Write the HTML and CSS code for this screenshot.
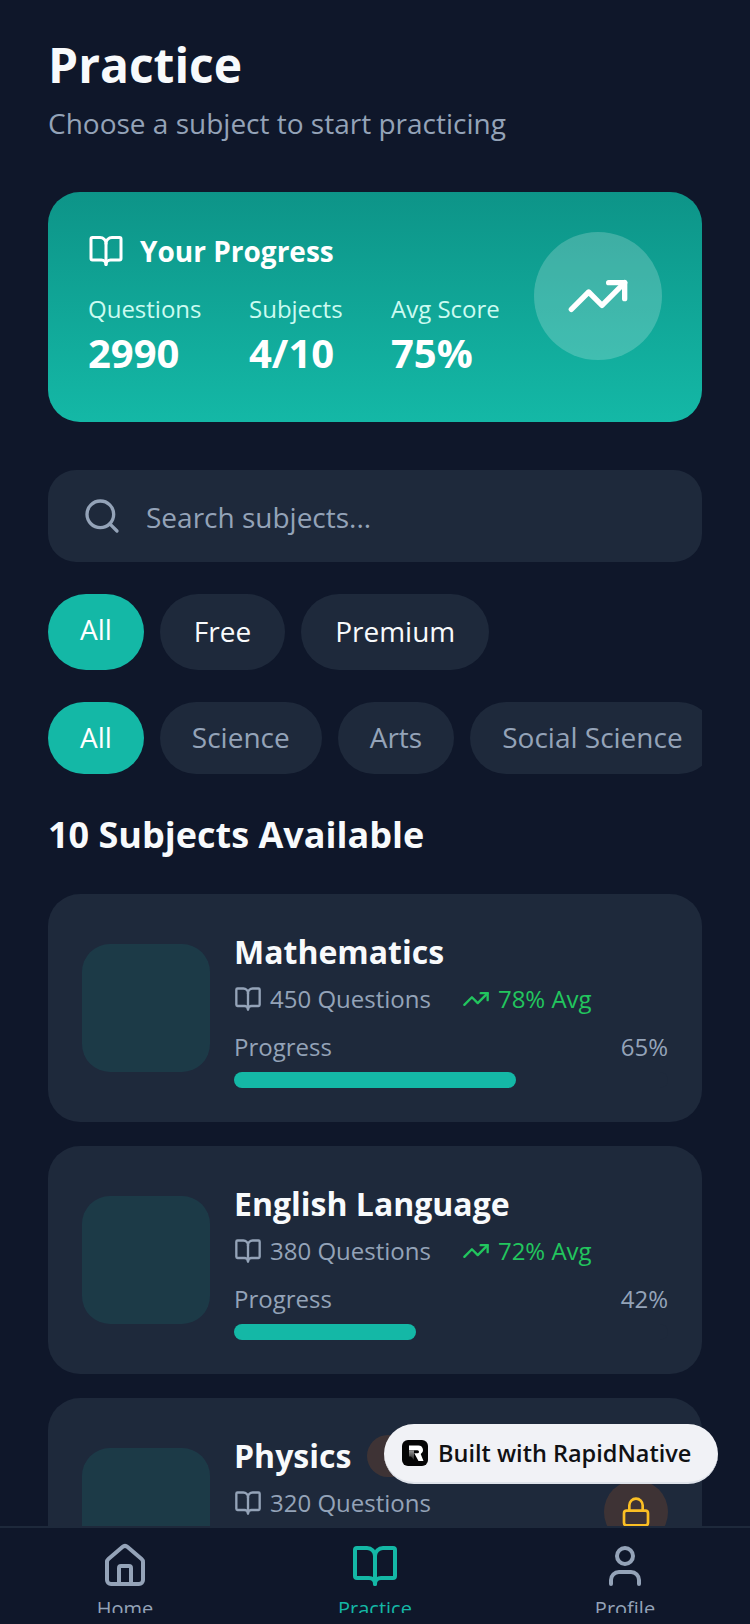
FILE: index.html
```html
<!DOCTYPE html>
<html lang="en">

<head>
    <meta charset="UTF-8">
    <meta name="viewport" content="width=device-width, initial-scale=1.0">
    <title>Practice</title>
    <link rel="stylesheet" href="styles.css">
</head>

<body>
    <div class="app">
        <div class="content">
            <h1 class="title">Practice</h1>
            <p class="subtitle">Choose a subject to start practicing</p>

            <div class="hero">
                <div class="hero-left">
                    <div class="hero-head">
                        <svg class="icon-hero-book" viewBox="0 0 24 24"><path d="M12 7v14" /><path d="M3 18a1 1 0 0 1-1-1V4a1 1 0 0 1 1-1h5a4 4 0 0 1 4 4 4 4 0 0 1 4-4h5a1 1 0 0 1 1 1v13a1 1 0 0 1-1 1h-6a3 3 0 0 0-3 3 3 3 0 0 0-3-3z" /></svg>
                        <span>Your Progress</span>
                    </div>
                    <div class="stats">
                        <div class="stat stat-q">
                            <div class="stat-label">Questions</div>
                            <div class="stat-value">2990</div>
                        </div>
                        <div class="stat stat-s">
                            <div class="stat-label">Subjects</div>
                            <div class="stat-value">4/10</div>
                        </div>
                        <div class="stat">
                            <div class="stat-label">Avg Score</div>
                            <div class="stat-value">75%</div>
                        </div>
                    </div>
                </div>
                <div class="hero-circle">
                    <svg class="icon-hero-trend" viewBox="0 0 24 24"><path d="M22 7 13.5 15.5 8.5 10.5 2 17" /><path d="M16 7h6v6" /></svg>
                </div>
            </div>

            <div class="search">
                <svg class="icon-search" viewBox="0 0 24 24"><circle cx="11" cy="11" r="8" /><path d="m21 21-4.3-4.3" /></svg>
                <span>Search subjects...</span>
            </div>

            <div class="chips chips-top">
                <span class="chip chip-active">All</span>
                <span class="chip chip-light">Free</span>
                <span class="chip chip-light">Premium</span>
            </div>

            <div class="chips chips-cat">
                <span class="chip chip-active">All</span>
                <span class="chip">Science</span>
                <span class="chip">Arts</span>
                <span class="chip">Social Science</span>
            </div>

            <h2 class="section">10 Subjects Available</h2>

            <div class="cards">
                <div class="card">
                    <div class="thumb"></div>
                    <div class="card-body">
                        <div class="card-title">Mathematics</div>
                        <div class="meta">
                            <span class="meta-item">
                                <svg class="icon-meta" viewBox="0 0 24 24"><path d="M12 7v14" /><path d="M3 18a1 1 0 0 1-1-1V4a1 1 0 0 1 1-1h5a4 4 0 0 1 4 4 4 4 0 0 1 4-4h5a1 1 0 0 1 1 1v13a1 1 0 0 1-1 1h-6a3 3 0 0 0-3 3 3 3 0 0 0-3-3z" /></svg>
                                450 Questions
                            </span>
                            <span class="meta-item meta-green">
                                <svg class="icon-meta" viewBox="0 0 24 24"><path d="M22 7 13.5 15.5 8.5 10.5 2 17" /><path d="M16 7h6v6" /></svg>
                                78% Avg
                            </span>
                        </div>
                        <div class="progress-row"><span>Progress</span><span>65%</span></div>
                        <div class="bar"><div class="bar-fill" style="width: 65%"></div></div>
                    </div>
                </div>

                <div class="card">
                    <div class="thumb"></div>
                    <div class="card-body">
                        <div class="card-title">English Language</div>
                        <div class="meta">
                            <span class="meta-item">
                                <svg class="icon-meta" viewBox="0 0 24 24"><path d="M12 7v14" /><path d="M3 18a1 1 0 0 1-1-1V4a1 1 0 0 1 1-1h5a4 4 0 0 1 4 4 4 4 0 0 1 4-4h5a1 1 0 0 1 1 1v13a1 1 0 0 1-1 1h-6a3 3 0 0 0-3 3 3 3 0 0 0-3-3z" /></svg>
                                380 Questions
                            </span>
                            <span class="meta-item meta-green">
                                <svg class="icon-meta" viewBox="0 0 24 24"><path d="M22 7 13.5 15.5 8.5 10.5 2 17" /><path d="M16 7h6v6" /></svg>
                                72% Avg
                            </span>
                        </div>
                        <div class="progress-row"><span>Progress</span><span>42%</span></div>
                        <div class="bar"><div class="bar-fill" style="width: 42%"></div></div>
                    </div>
                </div>

                <div class="card">
                    <div class="thumb"></div>
                    <div class="card-body">
                        <div class="card-title-row">
                            <div class="card-title">Physics</div>
                            <span class="pill">Premium</span>
                        </div>
                        <div class="meta-row">
                            <div class="meta">
                                <span class="meta-item">
                                    <svg class="icon-meta" viewBox="0 0 24 24"><path d="M12 7v14" /><path d="M3 18a1 1 0 0 1-1-1V4a1 1 0 0 1 1-1h5a4 4 0 0 1 4 4 4 4 0 0 1 4-4h5a1 1 0 0 1 1 1v13a1 1 0 0 1-1 1h-6a3 3 0 0 0-3 3 3 3 0 0 0-3-3z" /></svg>
                                    320 Questions
                                </span>
                            </div>
                            <div class="lock">
                                <svg class="icon-lock" viewBox="0 0 24 24"><rect x="3" y="11" width="18" height="11" rx="2" /><path d="M7 11V7a5 5 0 0 1 10 0v4" /></svg>
                            </div>
                        </div>
                    </div>
                </div>
            </div>
        </div>

        <div class="nav">
            <div class="nav-item">
                <svg class="icon-nav" viewBox="0 0 24 24"><path d="M15 21v-8a1 1 0 0 0-1-1h-4a1 1 0 0 0-1 1v8" /><path d="M3 10a2 2 0 0 1 .7-1.5l7-6a2 2 0 0 1 2.6 0l7 6a2 2 0 0 1 .7 1.5v9a2 2 0 0 1-2 2H5a2 2 0 0 1-2-2z" /></svg>
                <span>Home</span>
            </div>
            <div class="nav-item nav-active">
                <svg class="icon-nav" viewBox="0 0 24 24"><path d="M12 7v14" /><path d="M3 18a1 1 0 0 1-1-1V4a1 1 0 0 1 1-1h5a4 4 0 0 1 4 4 4 4 0 0 1 4-4h5a1 1 0 0 1 1 1v13a1 1 0 0 1-1 1h-6a3 3 0 0 0-3 3 3 3 0 0 0-3-3z" /></svg>
                <span>Practice</span>
            </div>
            <div class="nav-item">
                <svg class="icon-nav" viewBox="0 0 24 24"><path d="M19 21v-2a4 4 0 0 0-4-4H9a4 4 0 0 0-4 4v2" /><circle cx="12" cy="7" r="4" /></svg>
                <span>Profile</span>
            </div>
        </div>

        <div class="badge">
            <svg class="badge-logo" viewBox="0 0 26 26">
                <defs>
                    <linearGradient id="logoStem" x1="0" y1="0" x2="0" y2="1">
                        <stop offset="0" stop-color="#9a9a9a" />
                        <stop offset="1" stop-color="#1c1c1c" />
                    </linearGradient>
                </defs>
                <rect width="26" height="26" rx="6" fill="#050505" />
                <path d="M7 10.5h5v9.5l-3-3.500H7z" fill="url(#logoStem)" />
                <path d="M7 5.500h9.500a4.500 4.500 0 0 1 2.200 8.400L21.500 21h-5l-4.200-7.800H15.500a1.500 1.500 0 0 0 0-3H7z" fill="#fff" />
            </svg>
            <span>Built with RapidNative</span>
        </div>
    </div>
</body>

</html>
```

FILE: styles.css
```css
* {
    padding: 0;
    margin: 0;
    box-sizing: border-box;
}

html,
body {
    width: 750px;
    height: 1624px;
    overflow: hidden;
    background-color: #0f172a;
}

body {
    font-family: "Open Sans", "Noto Sans", sans-serif;
    color: #fff;
}

svg {
    fill: none;
    stroke: currentColor;
    stroke-linecap: round;
    stroke-linejoin: round;
    flex-shrink: 0;
}

.app {
    width: 750px;
    height: 1624px;
    position: relative;
    display: flex;
    flex-direction: column;
    overflow: hidden;
}

.content {
    flex: 1;
    min-height: 0;
    overflow: hidden;
    padding: 33px 48px 0;
}

.title {
    font-size: 48px;
    line-height: 64px;
    font-weight: 700;
    color: #f8fafc;
}

.subtitle {
    font-size: 28px;
    line-height: 40px;
    margin-top: 6px;
    color: #94a3b8;
}

/* progress card */
.hero {
    height: 230px;
    margin-top: 49px;
    padding: 40px 40px 0;
    border-radius: 32px;
    background: linear-gradient(180deg, #0d9488, #14b8a6);
    display: flex;
    align-items: flex-start;
    justify-content: space-between;
}

.hero-left {
    margin-top: -1px;
}

.hero-head {
    display: flex;
    align-items: center;
    gap: 16px;
    font-size: 28px;
    line-height: 40px;
    font-weight: 700;
}

.icon-hero-book {
    width: 36px;
    height: 36px;
    stroke-width: 2;
}

.stats {
    display: flex;
    margin-top: 22px;
}

.stat-q {
    width: 161px;
}

.stat-s {
    width: 142px;
}

.stat-label {
    font-size: 24px;
    line-height: 32px;
    color: #ccfbf1;
}

.stat-value {
    font-size: 40px;
    line-height: 56px;
    font-weight: 700;
}

.hero-circle {
    width: 128px;
    height: 128px;
    border-radius: 50%;
    background-color: rgba(255, 255, 255, .2);
    display: flex;
    align-items: center;
    justify-content: center;
}

.icon-hero-trend {
    width: 64px;
    height: 64px;
    stroke-width: 2;
}

/* search and filters */
.search {
    height: 92px;
    margin-top: 48px;
    padding: 0 34px;
    border-radius: 28px;
    background-color: #1e293b;
    display: flex;
    align-items: center;
    gap: 24px;
    font-size: 28px;
    color: #94a3b8;
}

.search span {
    padding-top: 2px;
}

.icon-search {
    width: 40px;
    height: 40px;
    stroke-width: 2;
}

.chips {
    display: flex;
    gap: 16px;
    overflow: hidden;
}

.chips-top {
    height: 76px;
    margin-top: 32px;
}

.chips-cat {
    height: 72px;
    margin-top: 32px;
}

.chip {
    flex-shrink: 0;
    padding: 0 32px 2px;
    border-radius: 40px;
    background-color: #1e293b;
    display: flex;
    align-items: center;
    font-size: 28px;
    color: #94a3b8;
}

.chip-light {
    padding-left: 34px;
    padding-right: 34px;
    color: #f8fafc;
}

.chip-active {
    background-color: #14b8a6;
    color: #fff;
}

.chips-top .chip-active {
    padding-bottom: 6px;
}

.section {
    font-size: 36px;
    line-height: 48px;
    font-weight: 700;
    color: #f8fafc;
    margin-top: 37px;
}

/* subject cards */
.cards {
    margin-top: 35px;
    display: flex;
    flex-direction: column;
    gap: 24px;
}

.card {
    height: 228px;
    flex-shrink: 0;
    padding: 36px 34px 0;
    border-radius: 32px;
    background-color: #1e293b;
    display: flex;
    align-items: flex-start;
    gap: 24px;
}

.thumb {
    width: 128px;
    height: 128px;
    margin-top: 14px;
    border-radius: 28px;
    background-color: rgba(20, 184, 166, .12);
    flex-shrink: 0;
}

.card-body {
    flex: 1;
    min-width: 0;
}

.card-title-row {
    display: flex;
    align-items: center;
    gap: 16px;
}

.card-title {
    font-size: 32px;
    line-height: 44px;
    font-weight: 700;
    color: #f8fafc;
}

.pill {
    padding: 5px 20px;
    border-radius: 24px;
    background-color: rgba(249, 115, 22, .15);
    color: #f59e0b;
    font-size: 24px;
    line-height: 32px;
}

.meta {
    display: flex;
    gap: 31px;
    margin-top: 7px;
}

.meta-row {
    display: flex;
    align-items: flex-start;
    justify-content: space-between;
}

.meta-item {
    display: flex;
    align-items: center;
    gap: 8px;
    font-size: 24px;
    line-height: 36px;
    color: #94a3b8;
}

.meta-green {
    color: #22c55e;
}

.icon-meta {
    width: 28px;
    height: 28px;
    stroke-width: 2;
}

.progress-row {
    display: flex;
    justify-content: space-between;
    margin-top: 12px;
    font-size: 24px;
    line-height: 36px;
    color: #94a3b8;
}

.bar {
    height: 16px;
    margin-top: 7px;
    border-radius: 8px;
    background-color: #1e293b;
}

.bar-fill {
    height: 100%;
    border-radius: 8px;
    background-color: #14b8a6;
}

.lock {
    width: 64px;
    height: 64px;
    margin-top: 2px;
    border-radius: 50%;
    background-color: rgba(249, 115, 22, .15);
    color: #fbbf24;
    display: flex;
    align-items: center;
    justify-content: center;
}

.icon-lock {
    width: 32px;
    height: 32px;
    stroke-width: 2;
}

/* bottom tabs */
.nav {
    height: 98px;
    flex-shrink: 0;
    border-top: 2px solid #1e293b;
    background-color: #0f172a;
    display: grid;
    grid-template-columns: repeat(3, 1fr);
    align-items: start;
}

.nav-item {
    height: 85px;
    padding-top: 14px;
    overflow: hidden;
    display: flex;
    flex-direction: column;
    align-items: center;
    font-size: 20px;
    line-height: 28px;
    color: #94a3b8;
}

.nav-active {
    color: #14b8a6;
}

.icon-nav {
    width: 48px;
    height: 48px;
    stroke-width: 2;
    margin-bottom: 5px;
}

/* floating badge */
.badge {
    position: absolute;
    left: 384px;
    top: 1424px;
    width: 334px;
    height: 60px;
    border-radius: 30px;
    background-color: #f1f2f6;
    border-bottom: 2px solid #dfe3ea;
    display: flex;
    align-items: center;
    gap: 10px;
    padding-left: 18px;
    color: #101114;
    font-size: 23.5px;
    font-weight: 600;
}

.badge-logo {
    width: 26px;
    height: 26px;
    stroke: none;
}
```
